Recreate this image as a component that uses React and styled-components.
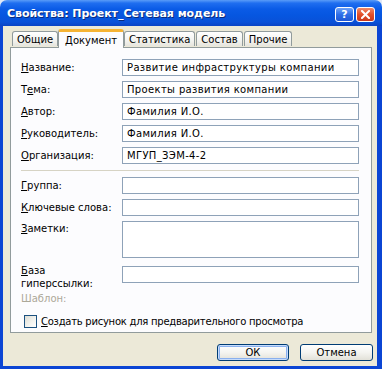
import React from 'react';
import styled, { createGlobalStyle, css } from 'styled-components';

const LUNA_BLUE = '#0b45d4';
const DIALOG_BG = '#ece9d8';
const PANEL_BG = '#fcfcfe';
const TAB_BORDER = '#919b9c';
const FIELD_BORDER = '#8ea2b8';

const GlobalStyle = createGlobalStyle`
  html, body {
    margin: 0;
    padding: 0;
    background: #dfe8f7;
  }
  * { box-sizing: border-box; }
`;

const Window = styled.div`
  width: 382px;
  height: 369px;
  display: flex;
  flex-direction: column;
  font-family: "DejaVu Sans", "Liberation Sans", sans-serif;
  font-size: 10px;
  color: #000;
  overflow: hidden;
`;

const TitleBar = styled.div`
  height: 26px;
  flex: none;
  display: flex;
  align-items: center;
  padding: 0 7px 0 7px;
  border-radius: 7px 7px 0 0;
  background: linear-gradient(
    180deg,
    #5a9cf8 0%,
    #1f6ef0 12%,
    #0a5be6 35%,
    #0656e0 60%,
    #0a51d8 85%,
    #0b43c4 100%
  );
`;

const Title = styled.div`
  flex: 1;
  color: #fff;
  font-weight: bold;
  font-size: 11px;
  letter-spacing: -0.05px;
  text-shadow: 1px 1px 0 #0a2a7a;
  white-space: nowrap;
`;

const CaptionButtons = styled.div`
  display: flex;
  gap: 2px;
  margin-top: 2px;
`;

const CaptionButton = styled.div`
  width: 19px;
  height: 15px;
  border: 1px solid #fff;
  border-radius: 3px;
  display: flex;
  align-items: center;
  justify-content: center;
  color: #fff;
  font-weight: bold;
  font-size: 11px;
  ${({ close }) =>
    close
      ? css`background: linear-gradient(180deg, #f08a68 0%, #e2502a 50%, #c9381a 100%);`
      : css`background: linear-gradient(180deg, #6fa3f8 0%, #2f6fe8 50%, #1f58d6 100%);`}
`;

const Body = styled.div`
  flex: 1;
  display: flex;
  flex-direction: column;
  background: ${DIALOG_BG};
  border-left: 3px solid ${LUNA_BLUE};
  border-right: 5px solid ${LUNA_BLUE};
  border-bottom: 3px solid ${LUNA_BLUE};
  padding: 3px 5px 0 7px;
`;

const TabRow = styled.div`
  display: flex;
  align-items: flex-end;
  gap: 1px;
  height: 18px;
  padding-left: 2px;
  position: relative;
  z-index: 1;
`;

const Tab = styled.div`
  height: 15px;
  padding: 0 4px;
  display: flex;
  align-items: center;
  white-space: nowrap;
  border: 1px solid ${TAB_BORDER};
  border-bottom: none;
  border-radius: 3px 3px 0 0;
  background: linear-gradient(180deg, #ffffff 0%, #f3f3ef 60%, #e6e5dd 100%);
  margin-bottom: 1px;
  ${({ active }) =>
    active &&
    css`
      height: 19px;
      margin: 0 -1px -1px;
      padding: 0 6px;
      background: ${PANEL_BG};
      border-top: 3px solid #f6b434;
    `}
`;

const Panel = styled.div`
  border: 1px solid ${TAB_BORDER};
  background: ${PANEL_BG};
  padding: 11px 12px 4px 10px;
`;

const FieldGrid = styled.div`
  display: grid;
  grid-template-columns: 101px 1fr;
  row-gap: 5px;
  align-items: center;
`;

const Label = styled.div`
  white-space: nowrap;
  line-height: 13px;
  ${({ top }) => top && css`align-self: start; margin-top: 1px;`}
  ${({ muted }) => muted && css`color: #aca899;`}
`;

const Key = styled.span`
  text-decoration: underline;
  text-underline-offset: 1px;
`;

const Field = styled.div`
  height: ${({ tall }) => (tall ? '37px' : '17px')};
  border: 1px solid ${FIELD_BORDER};
  background: #fff;
  padding: 0 4px;
  display: flex;
  align-items: center;
  white-space: nowrap;
  overflow: hidden;
  letter-spacing: 0.35px;
  ${({ offset }) => offset && css`align-self: start; margin-top: 3px;`}
`;

const Separator = styled.div`
  height: 1px;
  background: #d6d3c4;
  margin: 6px 0;
`;

const TemplateLabel = styled(Label)`
  margin-top: 2px;
`;

const CheckRow = styled.div`
  display: flex;
  align-items: center;
  gap: 4px;
  margin: 10px 0 0 3px;
  height: 13px;
  letter-spacing: -0.25px;
`;

const CheckBox = styled.div`
  width: 13px;
  height: 13px;
  border: 1px solid #1c5180;
  background: linear-gradient(135deg, #dcdcd4 0%, #f4f4f0 60%, #ffffff 100%);
`;

const ButtonRow = styled.div`
  display: flex;
  justify-content: flex-end;
  gap: 11px;
  margin: 11px -1px 0 0;
`;

const Button = styled.div`
  width: ${({ primary }) => (primary ? '72px' : '73px')};
  height: 17px;
  border: 1px solid #003c74;
  border-radius: 3px;
  display: flex;
  align-items: center;
  justify-content: center;
  background: linear-gradient(180deg, #ffffff 0%, #f4f4f0 50%, #e2e1d8 100%);
  ${({ primary }) =>
    primary &&
    css`box-shadow: inset 0 0 0 1px #c6dcfc, inset 0 0 0 2px #8ab0ee;`}
`;

const topFields = [
  { key: 'Н', rest: 'азвание:', value: 'Развитие инфраструктуры компании' },
  { pre: 'Т', key: 'е', rest: 'ма:', value: 'Проекты развития компании' },
  { key: 'А', rest: 'втор:', value: 'Фамилия И.О.' },
  { key: 'Р', rest: 'уководитель:', value: 'Фамилия И.О.' },
  { key: 'О', rest: 'рганизация:', value: 'МГУП_ЗЭМ-4-2' },
];

const tabs = ['Общие', 'Документ', 'Статистика', 'Состав', 'Прочие'];

const App = () => (
  <>
    <GlobalStyle />
    <Window>
      <TitleBar>
        <Title>Свойства: Проект_Сетевая модель</Title>
        <CaptionButtons>
          <CaptionButton>?</CaptionButton>
          <CaptionButton close>
            <svg width="9" height="9" viewBox="0 0 9 9">
              <path d="M1 1 L8 8 M8 1 L1 8" stroke="#fff" strokeWidth="2" strokeLinecap="square" />
            </svg>
          </CaptionButton>
        </CaptionButtons>
      </TitleBar>
      <Body>
        <TabRow>
          {tabs.map((t) => (
            <Tab key={t} active={t === 'Документ'}>{t}</Tab>
          ))}
        </TabRow>
        <Panel>
          <FieldGrid>
            {topFields.map((f) => (
              <React.Fragment key={f.rest}>
                <Label>
                  {f.pre}
                  <Key>{f.key}</Key>
                  {f.rest}
                </Label>
                <Field>{f.value}</Field>
              </React.Fragment>
            ))}
          </FieldGrid>
          <Separator />
          <FieldGrid>
            <Label><Key>Г</Key>руппа:</Label>
            <Field />
            <Label><Key>К</Key>лючевые слова:</Label>
            <Field />
            <Label top><Key>З</Key>аметки:</Label>
            <Field tall />
            <Label top><Key>Б</Key>аза<br />гиперссылки:</Label>
            <Field offset />
          </FieldGrid>
          <TemplateLabel muted>Шаблон:</TemplateLabel>
          <CheckRow>
            <CheckBox />
            <span><Key>С</Key>оздать рисунок для предварительного просмотра</span>
          </CheckRow>
        </Panel>
        <ButtonRow>
          <Button primary>ОК</Button>
          <Button>Отмена</Button>
        </ButtonRow>
      </Body>
    </Window>
  </>
);

export default App;
